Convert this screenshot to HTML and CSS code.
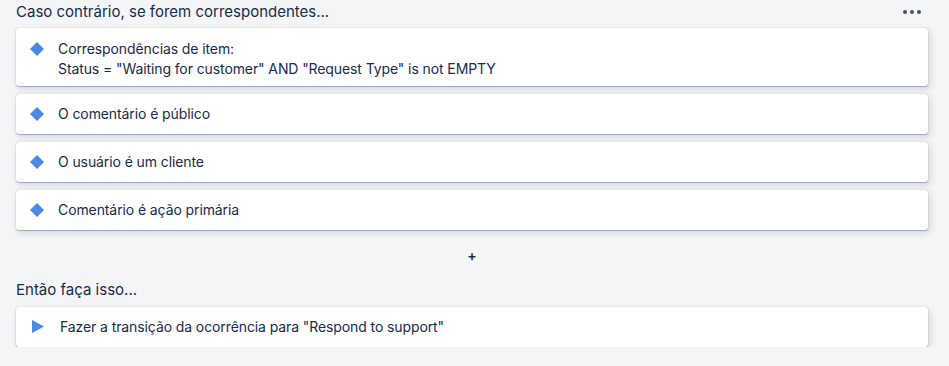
FILE: index.html
```html
<!DOCTYPE html>
<html lang="pt">
<head>
<meta charset="UTF-8">
<meta name="viewport" content="width=device-width, initial-scale=1.0">
<title>Regra de automação</title>
<link rel="stylesheet" href="styles.css">
</head>
<body>
<div class="branch">
  <div class="branch-header">
    <h2>Caso contrário, se forem correspondentes...</h2>
    <button class="more-btn" aria-label="Mais">
      <span></span><span></span><span></span>
    </button>
  </div>

  <div class="card-list">
    <div class="card card-multi">
      <svg class="icon" width="14" height="14" viewBox="0 0 14 14"><polygon points="7,0 14,7 7,14 0,7"/></svg>
      <div class="card-text">
        Correspondências de item:<br>
        Status = "Waiting for customer" AND "Request Type" is not EMPTY
      </div>
    </div>
    <div class="card">
      <svg class="icon" width="14" height="14" viewBox="0 0 14 14"><polygon points="7,0 14,7 7,14 0,7"/></svg>
      <div class="card-text">O comentário é público</div>
    </div>
    <div class="card">
      <svg class="icon" width="14" height="14" viewBox="0 0 14 14"><polygon points="7,0 14,7 7,14 0,7"/></svg>
      <div class="card-text">O usuário é um cliente</div>
    </div>
    <div class="card">
      <svg class="icon" width="14" height="14" viewBox="0 0 14 14"><polygon points="7,0 14,7 7,14 0,7"/></svg>
      <div class="card-text">Comentário é ação primária</div>
    </div>
  </div>

  <div class="add-row">
    <button class="add-btn">+</button>
  </div>

  <h2>Então faça isso...</h2>

  <div class="card-list">
    <div class="card card-action">
      <svg class="icon icon-play" width="12" height="13" viewBox="0 0 12 13"><polygon points="0,0 12,6.5 0,13"/></svg>
      <div class="card-text">Fazer a transição da ocorrência para "Respond to support"</div>
    </div>
  </div>
</div>
</body>
</html>
```

FILE: styles.css
```css
body {
  font-family: Inter, "Liberation Sans", Arial, sans-serif;
  background-color: #f4f5f7;
  color: #172b4d;
  margin: 0;
  padding: 0;
}

.branch {
  padding: 0 21px 0 16px;
}

.branch-header {
  display: flex;
  justify-content: space-between;
  align-items: center;
  height: 24px;
}

h2 {
  margin: 0;
  font-size: 15px;
  font-weight: 400;
  line-height: 24px;
}

.more-btn {
  display: flex;
  gap: 3px;
  background: none;
  border: none;
  padding: 0;
  margin-right: 7px;
  cursor: pointer;
}

.more-btn span {
  width: 4px;
  height: 4px;
  border-radius: 50%;
  background-color: #42526e;
}

.card-list {
  display: flex;
  flex-direction: column;
  gap: 8px;
  margin-top: 4px;
}

.card {
  display: flex;
  align-items: flex-start;
  background-color: #fff;
  border-radius: 3px;
  box-shadow: 0 1px 1px rgba(9, 30, 66, 0.25), 0 0 1px rgba(9, 30, 66, 0.31), 2px 3px 7px rgba(9, 30, 66, 0.14);
  padding: 10px 16px 10px 14px;
  font-size: 14px;
  line-height: 20px;
  letter-spacing: -0.1px;
}

.card-multi {
  padding: 11px 16px 7px 14px;
}

.icon {
  flex: none;
  fill: #4b88e2;
  margin-top: 3px;
  margin-right: 14px;
}

.card-multi .icon {
  margin-top: 3px;
}

.icon-play {
  margin-left: 2px;
  margin-right: 16px;
}

.add-row {
  display: flex;
  justify-content: center;
  padding: 18px 0 14px;
}

.add-btn {
  background: none;
  border: none;
  padding: 0;
  font-family: inherit;
  font-size: 14px;
  font-weight: 600;
  line-height: 16px;
  color: #172b4d;
  cursor: pointer;
}

.card-list:last-child {
  margin-top: 5px;
}
```
